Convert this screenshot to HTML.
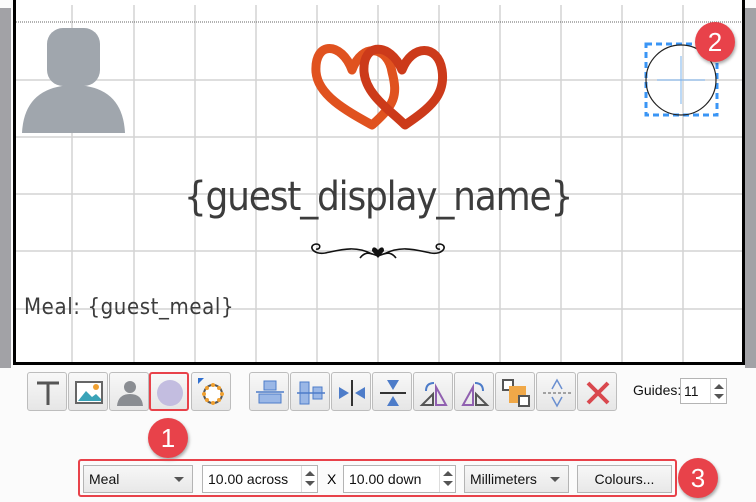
<!DOCTYPE html>
<html><head><meta charset="utf-8"><style>
*{margin:0;padding:0;box-sizing:border-box}
body{width:756px;height:502px;background:#fbfbfb;position:relative;overflow:hidden;font-family:"Liberation Sans",sans-serif}
.a{position:absolute}
.btn{position:absolute;top:372px;width:40px;height:39px;background:linear-gradient(#f8f8f8,#e6e6e6);border:1px solid #bdbdbd;border-radius:3px}
.btn svg{position:absolute;left:4px;top:4px}
.fld{position:absolute;top:465px;height:28px;border:1px solid #b4b4b4;background:#fff;font-size:14px;line-height:26px;padding-left:5px;color:#111}
.cmb{background:linear-gradient(#f7f7f7,#e8e8e8)}
.badge{position:absolute;width:40px;height:40px;border-radius:50%;background:#e8424a;color:#fff;font-size:26px;text-align:center;line-height:40px;box-shadow:1px 2px 3px rgba(0,0,0,.35)}
.arr{position:absolute;right:8px;top:11px;width:0;height:0;border-left:5px solid transparent;border-right:5px solid transparent;border-top:5px solid #555}
.spin{position:absolute;right:0;top:0;width:16px;height:26px;border-left:1px solid #ddd}
.spin:before{content:"";position:absolute;left:3px;top:5px;border-left:5px solid transparent;border-right:5px solid transparent;border-bottom:5px solid #555}
.spin:after{content:"";position:absolute;left:3px;top:15px;border-left:5px solid transparent;border-right:5px solid transparent;border-top:5px solid #555}
</style></head><body>
<div class="a" style="left:0;top:8px;width:11px;height:360px;background:#a2a2a6"></div>
<div class="a" style="left:745px;top:8px;width:11px;height:360px;background:#a2a2a6"></div>
<div class="a" style="left:13px;top:0;width:732px;height:365px;background:#fff;border-left:3px solid #000;border-right:3px solid #000;border-bottom:3px solid #000"></div>
<svg class="a" style="left:0;top:0" width="756" height="370">
<g stroke="#d3d3d3" stroke-width="1.5">
<line x1="72" y1="5" x2="72" y2="362"/><line x1="134" y1="5" x2="134" y2="362"/><line x1="195" y1="5" x2="195" y2="362"/><line x1="256" y1="5" x2="256" y2="362"/><line x1="317" y1="5" x2="317" y2="362"/><line x1="378" y1="5" x2="378" y2="362"/><line x1="439" y1="5" x2="439" y2="362"/><line x1="500" y1="5" x2="500" y2="362"/><line x1="561" y1="5" x2="561" y2="362"/><line x1="622" y1="5" x2="622" y2="362"/><line x1="683" y1="5" x2="683" y2="362"/>
<line x1="16" y1="80" x2="742" y2="80"/><line x1="16" y1="137" x2="742" y2="137"/><line x1="16" y1="194" x2="742" y2="194"/><line x1="16" y1="251" x2="742" y2="251"/><line x1="16" y1="309" x2="742" y2="309"/>
</g>
<line x1="16" y1="22" x2="742" y2="22" stroke="#666" stroke-dasharray="1,1"/>
<rect x="47" y="28" width="53" height="58" rx="16" fill="#a0a6ad"/>
<path d="M22 133 Q24 92 62 86 L86 86 Q123 92 125 133 Z" fill="#a0a6ad"/>
<g fill="none" stroke-linejoin="round">
<path d="M352 70 C342 42 314 40 316 72 C318 95 345 110 372 125 C395 105 398 95 392 72 C388 46 362 42 352 70 Z" stroke="#e0521f" stroke-width="9"/>
<path d="M402 70 C390 42 362 42 364 72 C366 95 390 110 405 125 C430 108 446 95 442 70 C438 44 412 44 402 70 Z" stroke="#cc3a1a" stroke-width="9"/>
</g>
<g fill="none" stroke="#111" stroke-width="1.6">
<path d="M372 254 C355 245 340 250 325 253 C312 255 308 245 316 244 C322 244 320 250 316 249"/>
<path d="M384 254 C401 245 416 250 431 253 C444 255 448 245 440 244 C434 244 436 250 440 249"/>
<path d="M360 258 C366 250 372 254 378 256 C384 254 390 250 396 258"/>
</g>
<path d="M378 258 L372 251 Q372 246 376 248 L378 250 L380 248 Q384 246 384 251 Z" fill="#111"/>
<rect x="646" y="44" width="71" height="71" fill="none" stroke="#3a95f5" stroke-width="3" stroke-dasharray="6,4"/>
<circle cx="681" cy="80" r="35" fill="none" stroke="#222" stroke-width="1.2"/>
<line x1="657" y1="80" x2="705" y2="80" stroke="#7ab3ee"/><line x1="681" y1="56" x2="681" y2="104" stroke="#7ab3ee"/>
</svg>
<div class="a" style="left:0;top:174px;width:756px;text-align:center;font-size:40px;color:#3c3c3c;font-family:'DejaVu Sans Condensed','Liberation Sans Narrow',sans-serif;letter-spacing:-1.2px">{guest_display_name}</div>
<div class="a" style="left:24px;top:295px;font-size:22px;color:#3c3c3c;font-family:'DejaVu Sans Condensed','Liberation Sans Narrow',sans-serif;letter-spacing:0.6px">Meal: {guest_meal}</div>
<div class="badge" style="left:695px;top:22px">2</div>

<div class="btn" style="left:27px"><svg width="32" height="32"><path d="M5 6H27M16 6V28" stroke="#555" stroke-width="3"/></svg></div>
<div class="btn" style="left:68px"><svg width="32" height="32"><rect x="3" y="5" width="26" height="21" fill="#fff" stroke="#666" stroke-width="2"/><path d="M5 24 L13 14 L19 20 L23 17 L28 22 V24Z" fill="#3aa3b8"/><circle cx="23" cy="10" r="3" fill="#f0a030"/></svg></div>
<div class="btn" style="left:109px"><svg width="32" height="32"><circle cx="16" cy="10" r="6" fill="#8a8d92"/><path d="M3 29 Q4 17 16 17 Q28 17 29 29Z" fill="#8a8d92"/></svg></div>
<div class="btn" style="left:149px;border:2px solid #e8424a"><svg width="32" height="32"><circle cx="15" cy="15" r="13" fill="#c3bde0"/></svg></div>
<div class="btn" style="left:191px"><svg width="32" height="32"><path d="M2 1 L8 1 L2 7Z" fill="#2f6fd0"/><circle cx="17" cy="17" r="9" fill="#fff" stroke="#555" stroke-width="2"/><g fill="#f0a030"><circle cx="17" cy="8" r="2"/><circle cx="17" cy="26" r="2"/><circle cx="8" cy="17" r="2"/><circle cx="26" cy="17" r="2"/><circle cx="11" cy="11" r="2"/><circle cx="23" cy="11" r="2"/><circle cx="11" cy="23" r="2"/><circle cx="23" cy="23" r="2"/></g></svg></div>

<div class="btn" style="left:249px"><svg width="32" height="32"><rect x="10" y="4" width="12" height="9" fill="#9ab7e6" stroke="#4d7cc9"/><rect x="5" y="17" width="22" height="9" fill="#9ab7e6" stroke="#4d7cc9"/><line x1="2" y1="15" x2="30" y2="15" stroke="#4d7cc9" stroke-width="1.5"/></svg></div>
<div class="btn" style="left:290px"><svg width="32" height="32"><rect x="5" y="5" width="9" height="22" fill="#9ab7e6" stroke="#4d7cc9"/><rect x="18" y="10" width="9" height="12" fill="#9ab7e6" stroke="#4d7cc9"/><line x1="2" y1="16" x2="30" y2="16" stroke="#4d7cc9" stroke-width="1.5"/></svg></div>
<div class="btn" style="left:331px"><svg width="32" height="32"><line x1="16" y1="3" x2="16" y2="29" stroke="#333" stroke-width="2"/><path d="M3 10 L13 16 L3 22Z M29 10 L19 16 L29 22Z" fill="#4d7cc9"/></svg></div>
<div class="btn" style="left:372px"><svg width="32" height="32"><line x1="3" y1="16" x2="29" y2="16" stroke="#333" stroke-width="2"/><path d="M10 3 L16 13 L22 3Z M10 29 L16 19 L22 29Z" fill="#4d7cc9"/></svg></div>
<div class="btn" style="left:413px"><svg width="32" height="32"><path d="M4 28 L15 28 L15 17Z" fill="none" stroke="#555" stroke-width="2"/><path d="M18 28 L28 28 L18 10Z" fill="none" stroke="#9060b0" stroke-width="2"/><path d="M8 14 Q8 6 16 6" fill="none" stroke="#4d7cc9" stroke-width="2"/></svg></div>
<div class="btn" style="left:454px"><svg width="32" height="32"><path d="M4 28 L14 28 L14 10Z" fill="none" stroke="#9060b0" stroke-width="2"/><path d="M17 28 L28 28 L17 17Z" fill="none" stroke="#555" stroke-width="2"/><path d="M24 14 Q24 6 16 6" fill="none" stroke="#4d7cc9" stroke-width="2"/></svg></div>
<div class="btn" style="left:495px"><svg width="32" height="32"><rect x="3" y="3" width="10" height="10" fill="#fff" stroke="#555" stroke-width="2"/><rect x="9" y="9" width="17" height="17" fill="#f0a848"/><rect x="19" y="19" width="10" height="10" fill="#fff" stroke="#555" stroke-width="2"/></svg></div>
<div class="btn" style="left:536px"><svg width="32" height="32"><line x1="2" y1="16" x2="30" y2="16" stroke="#555" stroke-dasharray="3,2"/><path d="M11 12 L16 3 L21 12 M11 20 L16 29 L21 20" fill="none" stroke="#6a8fd0" stroke-width="1.5"/></svg></div>
<div class="btn" style="left:577px"><svg width="32" height="32"><path d="M6 6 L26 26 M26 6 L6 26" stroke="#d9484e" stroke-width="4"/></svg></div>
<div class="a" style="left:633px;top:382px;font-size:14px;color:#111">Guides:</div>
<div class="fld" style="left:680px;top:378px;width:47px;height:26px;line-height:24px;padding-left:3px">11<div class="spin" style="height:24px"></div></div>

<div class="badge" style="left:148px;top:418px">1</div>
<div class="a" style="left:78px;top:459px;width:599px;height:38px;border:2px solid #e8424a;border-radius:3px"></div>
<div class="fld cmb" style="left:83px;width:110px">Meal<div class="arr"></div></div>
<div class="fld" style="left:202px;width:116px">10.00 across<div class="spin"></div></div>
<div class="a" style="left:327px;top:471px;font-size:14px">X</div>
<div class="fld" style="left:343px;width:113px">10.00 down<div class="spin"></div></div>
<div class="fld cmb" style="left:464px;width:105px">Millimeters<div class="arr"></div></div>
<div class="fld cmb" style="left:577px;width:95px;text-align:center;padding-left:0">Colours...</div>
<div class="badge" style="left:678px;top:458px">3</div>
</body></html>
